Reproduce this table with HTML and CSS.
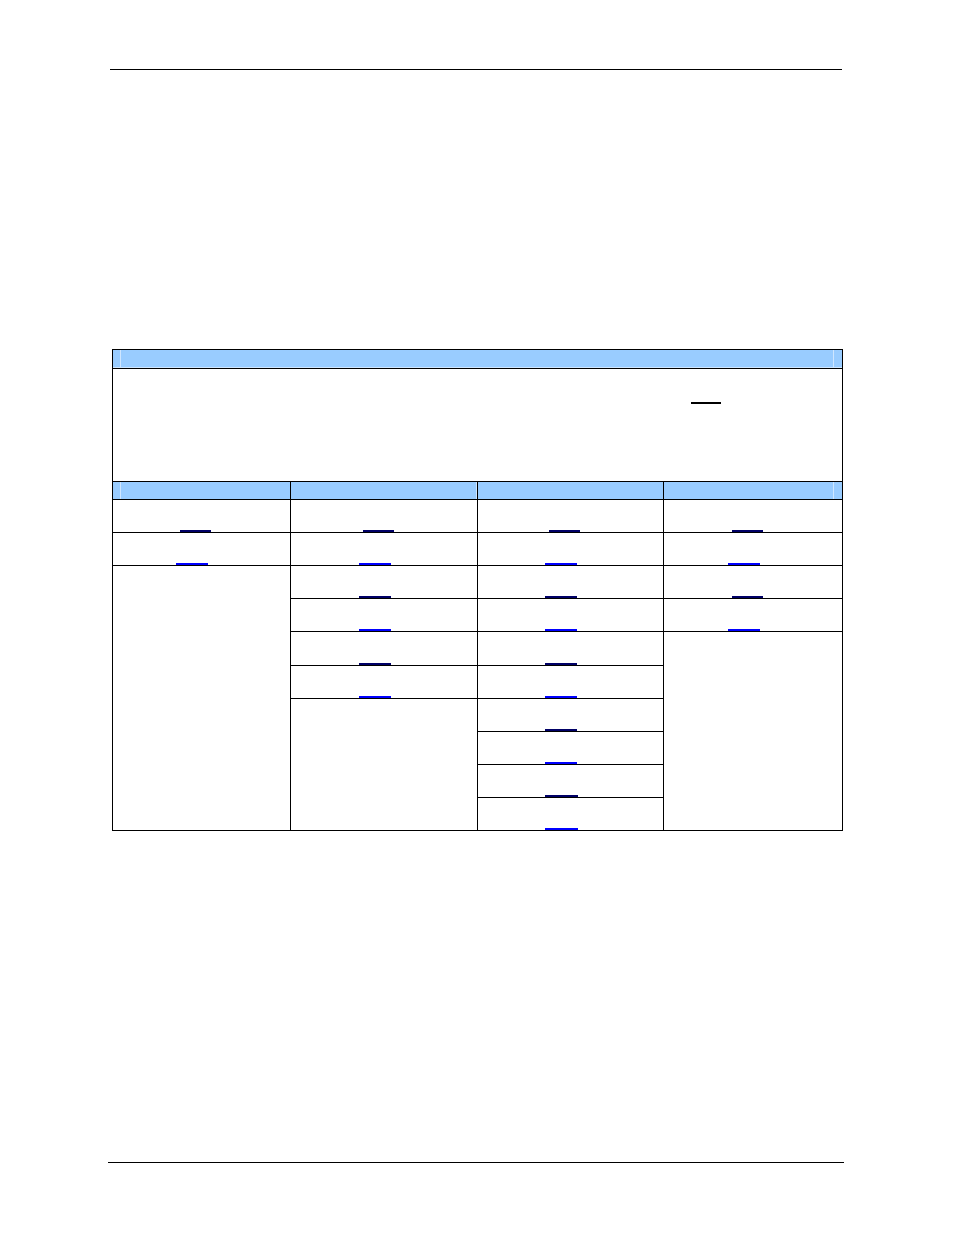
FILE: index.html
```html
<!DOCTYPE html>
<html>
<head>
<meta charset="utf-8">
<title>Page</title>
<link rel="stylesheet" href="styles.css">
</head>
<body>
<div class="page">
  <div class="rule rule-top"></div>
  <div class="table">
    <div class="cell head-bar"></div>
    <div class="cell desc"><span class="desc-link"></span></div>

    <div class="cell colhead ch1"></div>
    <div class="cell colhead ch2"></div>
    <div class="cell colhead ch3"></div>
    <div class="cell colhead ch4"></div>

    <!-- column 1 -->
    <div class="cell c1 r4"><span class="lnk odd dark"></span></div>
    <div class="cell c1 r5"><span class="lnk even"></span></div>
    <div class="cell c1 r6-end"></div>

    <!-- column 2 -->
    <div class="cell c2 r4"><span class="lnk odd dark"></span></div>
    <div class="cell c2 r5"><span class="lnk even"></span></div>
    <div class="cell c2 r6"><span class="lnk even dark"></span></div>
    <div class="cell c2 r7"><span class="lnk even"></span></div>
    <div class="cell c2 r8"><span class="lnk even dark"></span></div>
    <div class="cell c2 r9"><span class="lnk even"></span></div>
    <div class="cell c2 r10-end"></div>

    <!-- column 3 -->
    <div class="cell c3 r4"><span class="lnk odd dark"></span></div>
    <div class="cell c3 r5"><span class="lnk even"></span></div>
    <div class="cell c3 r6"><span class="lnk even dark"></span></div>
    <div class="cell c3 r7"><span class="lnk even"></span></div>
    <div class="cell c3 r8"><span class="lnk even dark"></span></div>
    <div class="cell c3 r9"><span class="lnk even"></span></div>
    <div class="cell c3 r10"><span class="lnk even dark"></span></div>
    <div class="cell c3 r11"><span class="lnk even"></span></div>
    <div class="cell c3 r12"><span class="lnk wide dark"></span></div>
    <div class="cell c3 r13"><span class="lnk wide"></span></div>

    <!-- column 4 -->
    <div class="cell c4 r4"><span class="lnk odd dark"></span></div>
    <div class="cell c4 r5"><span class="lnk even"></span></div>
    <div class="cell c4 r6"><span class="lnk odd dark"></span></div>
    <div class="cell c4 r7"><span class="lnk even"></span></div>
    <div class="cell c4 r8-end"></div>
  </div>
  <div class="rule rule-bottom"></div>
</div>
</body>
</html>
```

FILE: styles.css
```css
html, body {
  margin: 0;
  padding: 0;
  background: #ffffff;
  font-family: "Liberation Sans", Arial, sans-serif;
}

.page {
  width: 954px;
  height: 1235px;
  padding-top: 69px;
  box-sizing: border-box;
}

.rule {
  height: 1px;
  background: #000000;
}

.rule-top {
  margin-left: 110px;
  width: 732px;
}

.rule-bottom {
  margin-left: 108px;
  width: 736px;
  margin-top: 331px;
}

.table {
  margin-top: 279px;
  margin-left: 112px;
  width: 731px;
  box-sizing: border-box;
  display: grid;
  grid-template-columns: 177px 186px 185px 178px;
  grid-template-rows: 18px 112px 17px 32px 32px 32px 32px 33px 32px 32px 32px 32px 32px;
  gap: 1px;
  padding: 1px;
  background: #000000;
}

.cell {
  background: #ffffff;
  display: flex;
  flex-direction: column;
  justify-content: flex-end;
  align-items: center;
}

.head-bar {
  grid-column: 1 / 5;
  grid-row: 1;
  background:
    linear-gradient(to right, transparent 7px, #cfe6ff 7px, #cfe6ff 8px, transparent 8px),
    linear-gradient(to left, transparent 8px, #cfe6ff 8px, #cfe6ff 9px, transparent 9px),
    linear-gradient(to top, #cfe6ff 1px, transparent 1px),
    #99ccff;
}

.desc {
  grid-column: 1 / 5;
  grid-row: 2;
  justify-content: flex-start;
  align-items: flex-start;
}

.desc-link {
  display: block;
  width: 30px;
  height: 2px;
  background: #000000;
  margin-top: 33px;
  margin-left: 578px;
}

.colhead {
  grid-row: 3;
  background: #99ccff;
}

.ch1 {
  grid-column: 1;
  background:
    linear-gradient(to right, transparent 7px, #cfe6ff 7px, #cfe6ff 8px, transparent 8px),
    #99ccff;
}
.ch2 {
  grid-column: 2;
  background:
    linear-gradient(to left, #cfe6ff 1px, transparent 1px),
    #99ccff;
}
.ch3 { grid-column: 3; }
.ch4 {
  grid-column: 4;
  background:
    linear-gradient(to left, transparent 8px, #cfe6ff 8px, #cfe6ff 9px, transparent 9px),
    #99ccff;
}

.c1 { grid-column: 1; }
.c2 { grid-column: 2; }
.c3 { grid-column: 3; }
.c4 { grid-column: 4; }

.r4 { grid-row: 4; }
.r5 { grid-row: 5; }
.r6 { grid-row: 6; }
.r7 { grid-row: 7; }
.r8 { grid-row: 8; }
.r9 { grid-row: 9; }
.r10 { grid-row: 10; }
.r11 { grid-row: 11; }
.r12 { grid-row: 12; }
.r13 { grid-row: 13; }

.r6-end { grid-row: 6 / 14; }
.r8-end { grid-row: 8 / 14; }
.r10-end { grid-row: 10 / 14; }

.lnk {
  display: block;
  height: 2px;
  width: 31px;
  background: #0000ff;
}

.lnk.odd {
  margin-right: 12px;
}

.lnk.even {
  width: 32px;
  margin-right: 19px;
}

.lnk.wide {
  width: 33px;
  margin-right: 19px;
}

.lnk.dark {
  background: #000066;
}
```
